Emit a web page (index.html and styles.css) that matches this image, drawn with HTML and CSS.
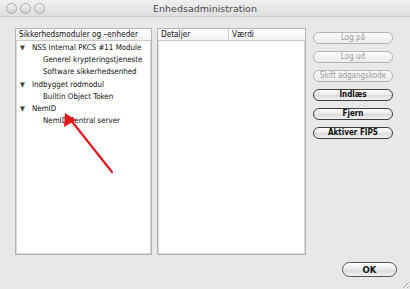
FILE: index.html
```html
<!DOCTYPE html>
<html lang="da">
<head>
    <meta charset="UTF-8">
    <title>Enhedsadministration</title>
    <link rel="stylesheet" href="styles.css">
</head>
<body>

<div class="window">
    <!-- Title bar -->
    <div class="titlebar">
        <div class="lights">
            <span class="light"></span>
            <span class="light"></span>
            <span class="light"></span>
        </div>
        <div class="title">Enhedsadministration</div>
    </div>

    <div class="content">
        <div class="box tree">
            <div class="box-head">
                <div class="col">Sikkerhedsmoduler og –enheder</div>
            </div>
            <div class="rows">
                <div class="row parent"><span class="tri">▼</span>NSS Internal PKCS #11 Module</div>
                <div class="row child">Generel krypteringstjeneste</div>
                <div class="row child">Software sikkerhedsenhed</div>
                <div class="row parent"><span class="tri">▼</span>Indbygget rodmodul</div>
                <div class="row child">Builtin Object Token</div>
                <div class="row parent"><span class="tri">▼</span>NemID</div>
                <div class="row child">NemID Central server</div>
            </div>
        </div>

        <div class="box details">
            <div class="box-head">
                <div class="col first">Detaljer</div>
                <div class="col">Værdi</div>
            </div>
        </div>

        <div class="actions">
            <button class="pill" disabled>Log på</button>
            <button class="pill" disabled>Log ud</button>
            <button class="pill" disabled>Skift adgangskode</button>
            <button class="pill">Indlæs</button>
            <button class="pill">Fjern</button>
            <button class="pill">Aktiver FIPS</button>
        </div>
    </div>

    <div class="footer">
        <button class="pill ok">OK</button>
    </div>

    <div class="grip"></div>

    <!-- Red annotation arrow -->
    <svg class="arrow" width="410" height="289" viewBox="0 0 410 289">
        <line x1="112" y1="172" x2="70" y2="119" stroke="#e0161b" stroke-width="2.2" stroke-linecap="round"/>
        <polygon points="65,113 64,127 76,120" fill="#e0161b"/>
    </svg>
</div>

</body>
</html>
```

FILE: styles.css
```css
/* General Styles */
body {
    margin: 0;
    padding: 0;
    font-family: "DejaVu Sans Condensed", "DejaVu Sans", sans-serif;
    color: #111;
}

.window {
    position: relative;
    width: 410px;
    height: 289px;
    background-color: #e8e8e8;
    overflow: hidden;
}

/* Title bar */
.titlebar {
    height: 17px;
    display: flex;
    align-items: center;
    background: linear-gradient(#f0f0f0, #dedede);
    border-bottom: 1px solid #c8c8c8;
    box-sizing: border-box;
    position: relative;
}

.lights {
    display: flex;
    gap: 3px;
    padding-left: 6px;
}

.light {
    width: 9px;
    height: 9px;
    border-radius: 50%;
    border: 1px solid #a9a9a9;
    background: linear-gradient(#f6f6f6, #d0d0d0);
}

.title {
    position: absolute;
    left: 0;
    right: 0;
    text-align: center;
    font-family: "DejaVu Sans", sans-serif;
    font-size: 9.5px;
    color: #4a4a4a;
}

/* Main area */
.content {
    display: flex;
    padding: 11px 0 0 15px;
    height: 227px;
}

.box {
    background-color: #ffffff;
    border: 1px solid #b4b4b4;
    box-shadow: inset 0 0 0 1px #d8d8d8;
    box-sizing: border-box;
    height: 227px;
}

.tree {
    width: 137px;
}

.details {
    width: 149px;
    margin-left: 5px;
}

.box-head {
    display: flex;
    height: 11px;
    border-bottom: 1px solid #c8c8c8;
    background: linear-gradient(#ffffff, #f1f1f1);
    font-size: 8.2px;
    line-height: 11px;
}

.col {
    padding-left: 3px;
}

.col.first {
    width: 67px;
    border-right: 1px solid #cfcfcf;
}

.rows {
    padding-top: 1px;
}

.row {
    height: 12.2px;
    line-height: 12px;
    font-size: 7.9px;
    white-space: nowrap;
}

.row.parent {
    padding-left: 4px;
}

.row.child {
    padding-left: 27px;
}

.tri {
    display: inline-block;
    width: 12px;
    font-size: 7px;
    color: #444;
    vertical-align: 0;
}

/* Buttons */
.actions {
    display: flex;
    flex-direction: column;
    gap: 7px;
    margin-left: 7px;
    padding-top: 4px;
}

.pill {
    width: 80px;
    height: 12px;
    padding: 0;
    border: 1px solid #3f3f3f;
    border-radius: 7px;
    background: linear-gradient(#ffffff, #e9e9e9 50%, #dadada 51%, #f2f2f2);
    font-family: "DejaVu Sans Condensed", "DejaVu Sans", sans-serif;
    font-size: 8px;
    font-weight: bold;
    line-height: 10px;
    color: #111;
}

.pill:disabled {
    border-color: #b4b4b4;
    font-weight: normal;
    color: #9a9a9a;
    background: linear-gradient(#fbfbfb, #ececec);
}

.footer {
    display: flex;
    justify-content: flex-end;
    padding: 7px 13px 0 0;
}

.pill.ok {
    width: 55px;
    height: 15px;
    border-radius: 8px;
    border-color: #555;
    font-size: 9.5px;
}

.grip {
    position: absolute;
    right: 1px;
    bottom: 1px;
    width: 9px;
    height: 9px;
    background: repeating-linear-gradient(135deg, transparent 0 2px, #a8a8a8 2px 3px);
    clip-path: polygon(100% 0, 100% 100%, 0 100%);
}

.arrow {
    position: absolute;
    left: 0;
    top: 0;
    pointer-events: none;
}
```
